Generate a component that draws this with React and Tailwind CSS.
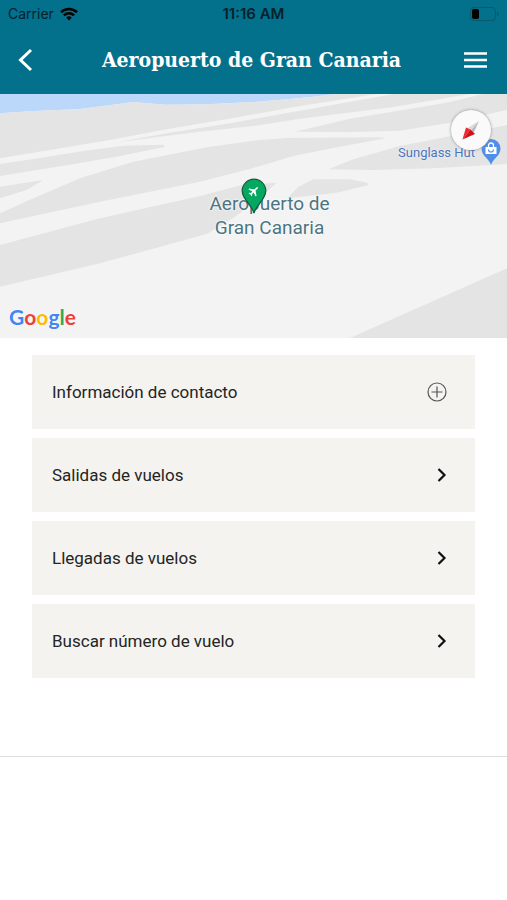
import React from "react";

const entries = [
  { label: "Información de contacto", expandable: true },
  { label: "Salidas de vuelos" },
  { label: "Llegadas de vuelos" },
  { label: "Buscar número de vuelo" },
];

function StatusBar() {
  return (
    <div className="grid h-7 grid-cols-3 items-center px-2 font-['Inter','Liberation_Sans',sans-serif] text-[#04222b]">
      <div className="flex items-center gap-1.5 text-sm">
        <span>Carrier</span>
        <svg width="18" height="14" viewBox="0 0 18 14" fill="none" stroke="#000" strokeWidth="2.6" aria-hidden="true">
          <path d="M1 5.3a11.4 11.4 0 0 1 16 0" />
          <path d="M4 8.3a7 7 0 0 1 10 0" />
          <path d="M9 13.5 6.3 10.7a3.8 3.8 0 0 1 5.4 0z" fill="#000" stroke="none" />
        </svg>
      </div>
      <span className="text-center text-[15px] font-semibold">11:16 AM</span>
      <svg className="justify-self-end" width="29" height="14" viewBox="0 0 29 14" aria-hidden="true">
        <rect x="0.5" y="0.5" width="25" height="13" rx="3.5" fill="none" stroke="#07596b" />
        <rect x="2" y="2" width="7" height="10" rx="2" fill="#000" />
        <path d="M27 4.5v5c2-1 2-4 0-5z" fill="#07596b" />
      </svg>
    </div>
  );
}

function AirportMap() {
  return (
    <section aria-label="Mapa" className="relative h-61 overflow-hidden bg-[#f3f3f3] font-['Roboto','Liberation_Sans',sans-serif]">
      <svg className="block h-full w-full" viewBox="0 12 1521 732" preserveAspectRatio="none" aria-hidden="true">
        <path d="M0 12H1010L940 20 860 28 760 36 620 43 500 44 440 40 400 36 350 43 240 57 90 64 0 70z" fill="#bbd8fb" />
        <g fill="#e4e4e4">
          <path d="M0 70 90 64 240 57 350 43 400 36 440 40 500 44 620 43 760 36 860 28 940 20 1000 12H1130L900 48 700 84 500 118 330 150 200 172 0 205z" />
          <path d="M350 157 500 130 700 98 900 62 1180 12H1410L1180 51 900 86 760 108 600 125z" />
          <path d="M0 222 120 204 250 183 370 167 490 164 496 170 350 200 200 226 0 258z" />
          <path d="M0 290 130 270 80 300 0 325z" />
          <path d="M0 370 100 325 240 265 400 215 620 172 760 152 860 144 1140 142 1158 145 1000 174 880 198 762 233 600 275 300 335 0 400z" />
          <path d="M885 125 1050 86 1340 38 1450 12H1521V60L1350 98 1200 122 1050 126z" />
          <path d="M985 238 1060 208 1200 168 1521 105V222L1300 235 1120 240z" />
          <path d="M0 465 300 385 600 318 725 285 830 278 790 315 705 380 620 432 300 520 0 590z" />
          <path d="M862 325 895 290 940 268 1050 268 1102 278 1104 286 1010 308z" />
          <path d="M1050 744 1521 535V744z" />
        </g>
      </svg>

      <p className="absolute inset-x-0 top-[98px] pl-8 text-center text-[19px] leading-6 text-[#4a7582] [text-shadow:0_0_2px_#fff,0_0_2px_#fff]">
        Aeropuerto de
        <br />
        Gran Canaria
      </p>
      <svg className="absolute top-[84px] left-1/2 -translate-x-1/2" width="26" height="36" viewBox="0 0 26 36" role="img" aria-label="Aeropuerto">
        <path d="M13 35.200C11.500 28 1.200 21 1.200 13a11.800 11.800 0 0 1 23.600 0C24.800 21 14.500 28 13 35.200z" fill="#06a760" stroke="#14583a" strokeWidth="1.200" />
        <path transform="translate(13 13) rotate(45) scale(.52)" d="M0-10c1 0 1.600 1 1.600 2.500V-2.500L10 3v2.200L1.600 2.800V7L4 9v1.600L0 9.400l-4 1.200V9l2.400-2V2.800L-10 5.200V3l8.400-5.500v-5C-1.600-9-1-10 0-10z" fill="#fff" />
      </svg>

      <div className="absolute top-[45px] right-[6px] flex items-center gap-1.5 text-[13px] text-[#4a74bd] [text-shadow:0_0_2px_#fff]">
        <span>Sunglass Hut</span>
        <svg width="20" height="28" viewBox="0 0 20 28" aria-hidden="true">
          <path d="M10 26C8.500 20 .5 17 .5 9.500a9.500 9.500 0 0 1 19 0C19.500 17 11.500 20 10 26z" fill="#4f8fea" />
          <path d="M4.500 8h11v7h-11z" fill="#fff" />
          <path d="M7.500 8V6.500a2.500 2.500 0 0 1 5 0V8" fill="none" stroke="#fff" strokeWidth="1.300" />
          <path d="M7.500 10.500a2.500 2.500 0 0 0 5 0" fill="none" stroke="#4f8fea" strokeWidth="1.200" />
        </svg>
      </div>
      <button type="button" aria-label="Brújula" className="absolute top-4 right-4 flex h-10 w-10 items-center justify-center rounded-full bg-[#fafafa] shadow-[0_0_3px_#888]">
        <svg width="20" height="20" viewBox="0 0 20 20" aria-hidden="true">
          <path d="M18 1 6.500 8 10 10.500z" fill="#dadada" />
          <path d="M18 1 10 10.500 12.500 13z" fill="#b8b8b8" />
          <path d="M1.500 19.500 5 7.500l4.500 2z" fill="#f0262c" />
          <path d="M1.500 19.500 9.500 9.500l4.500 4.500z" fill="#cf1219" />
        </svg>
      </button>

      <div className="absolute bottom-[7px] left-[9px] flex font-['Lato','Liberation_Sans',sans-serif] text-[21px] leading-7 font-bold [text-shadow:0_0_2px_#fff]">
        <span className="text-[#4285f4]">G</span>
        <span className="text-[#ea4335]">o</span>
        <span className="text-[#fbbc05]">o</span>
        <span className="text-[#4285f4]">g</span>
        <span className="text-[#34a853]">l</span>
        <span className="text-[#ea4335]">e</span>
      </div>
    </section>
  );
}

export default function App() {
  return (
    <div className="min-h-screen bg-white">
      <header className="h-[94px] bg-[#03718b]">
        <StatusBar />
        <div className="flex h-16 items-center justify-between px-4">
          <button type="button" aria-label="Volver" className="flex h-8 w-6 items-center">
            <svg width="20" height="24" viewBox="0 0 20 24" fill="none" stroke="#fff" strokeWidth="3" aria-hidden="true">
              <path d="M15 2 4.500 12 15 22" />
            </svg>
          </button>
          <h1 className="font-['DejaVu_Serif_Condensed','DejaVu_Serif',serif] text-[21px] font-bold text-white">Aeropuerto de Gran Canaria</h1>
          <button type="button" aria-label="Menú" className="flex h-8 w-7 items-center">
            <svg width="24" height="16" viewBox="0 0 24 16" stroke="#fff" strokeWidth="2.400" aria-hidden="true">
              <path d="M1 1.500h23M1 8h23M1 14.500h23" />
            </svg>
          </button>
        </div>
      </header>
      <main>
        <AirportMap />
        <ul className="flex flex-col gap-[9px] border-b border-[#dedede] px-8 pt-[17px] pb-[78px]">
          {entries.map((entry) => (
            <li key={entry.label}>
              <button
                type="button"
                className="flex h-[74px] w-full items-center justify-between bg-[#f4f3ef] pr-7 pl-5 text-left font-['Roboto','Noto_Sans',sans-serif] text-[17px] text-[#242424]"
              >
                <span className="pt-0.5">{entry.label}</span>
                {entry.expandable ? (
                  <svg width="20" height="20" viewBox="0 0 20 20" fill="none" stroke="#555" strokeWidth="1.200" aria-hidden="true">
                    <circle cx="10" cy="10" r="9" />
                    <path d="M10 4.500v11M4.500 10h11" />
                  </svg>
                ) : (
                  <svg width="10" height="16" viewBox="0 0 10 16" fill="none" stroke="#111" strokeWidth="2.200" aria-hidden="true">
                    <path d="M1.500 2 7.500 8l-6 6" />
                  </svg>
                )}
              </button>
            </li>
          ))}
        </ul>
      </main>
    </div>
  );
}
